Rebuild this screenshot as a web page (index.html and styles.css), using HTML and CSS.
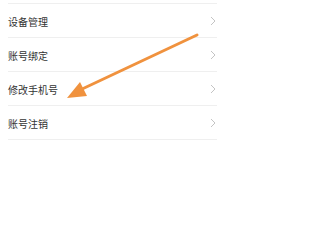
FILE: index.html
```html
<!DOCTYPE html>
<html lang="zh">
<head>
<meta charset="utf-8">
<link rel="stylesheet" href="styles.css">
</head>
<body>
<div class="page">
  <ul class="list">
    <li class="row"><span class="label">设备管理</span><svg class="chev" viewBox="0 0 6 10" width="6" height="10"><path d="M1 1 L5 5 L1 9" fill="none" stroke="#c4c4c4" stroke-width="1"/></svg></li>
    <li class="row"><span class="label">账号绑定</span><svg class="chev" viewBox="0 0 6 10" width="6" height="10"><path d="M1 1 L5 5 L1 9" fill="none" stroke="#c4c4c4" stroke-width="1"/></svg></li>
    <li class="row"><span class="label">修改手机号</span><svg class="chev" viewBox="0 0 6 10" width="6" height="10"><path d="M1 1 L5 5 L1 9" fill="none" stroke="#c4c4c4" stroke-width="1"/></svg></li>
    <li class="row last"><span class="label">账号注销</span><svg class="chev" viewBox="0 0 6 10" width="6" height="10"><path d="M1 1 L5 5 L1 9" fill="none" stroke="#c4c4c4" stroke-width="1"/></svg></li>
  </ul>
  <svg class="arrow" viewBox="0 0 226 223" width="226" height="223">
    <line x1="197" y1="35" x2="80" y2="90" stroke="#f0923e" stroke-width="3" stroke-linecap="round"/>
    <polygon points="67,98 80,82 87,96" fill="#f0923e"/>
  </svg>
</div>
</body>
</html>
```
FILE: styles.css
```css
html, body {
  margin: 0;
  padding: 0;
  background: #ffffff;
}
.page {
  position: relative;
  width: 226px;
  height: 223px;
  overflow: hidden;
}
.list {
  list-style: none;
  margin: 0;
  padding: 3px 0 0 0;
}
.row {
  display: flex;
  align-items: center;
  justify-content: space-between;
  height: 33px;
  margin: 0 9px 0 8px;
  padding-right: 1px;
  border-top: 1px solid #efefef;
}
.row.last {
  border-bottom: 1px solid #efefef;
}
.label {
  font-family: "Noto Sans CJK SC", "Noto Sans", sans-serif;
  font-size: 10px;
  color: #333333;
  letter-spacing: 0;
  margin-top: 1px;
}
.chev {
  display: block;
  margin-top: 1px;
}
.arrow {
  position: absolute;
  left: 0;
  top: 0;
  pointer-events: none;
}
```
